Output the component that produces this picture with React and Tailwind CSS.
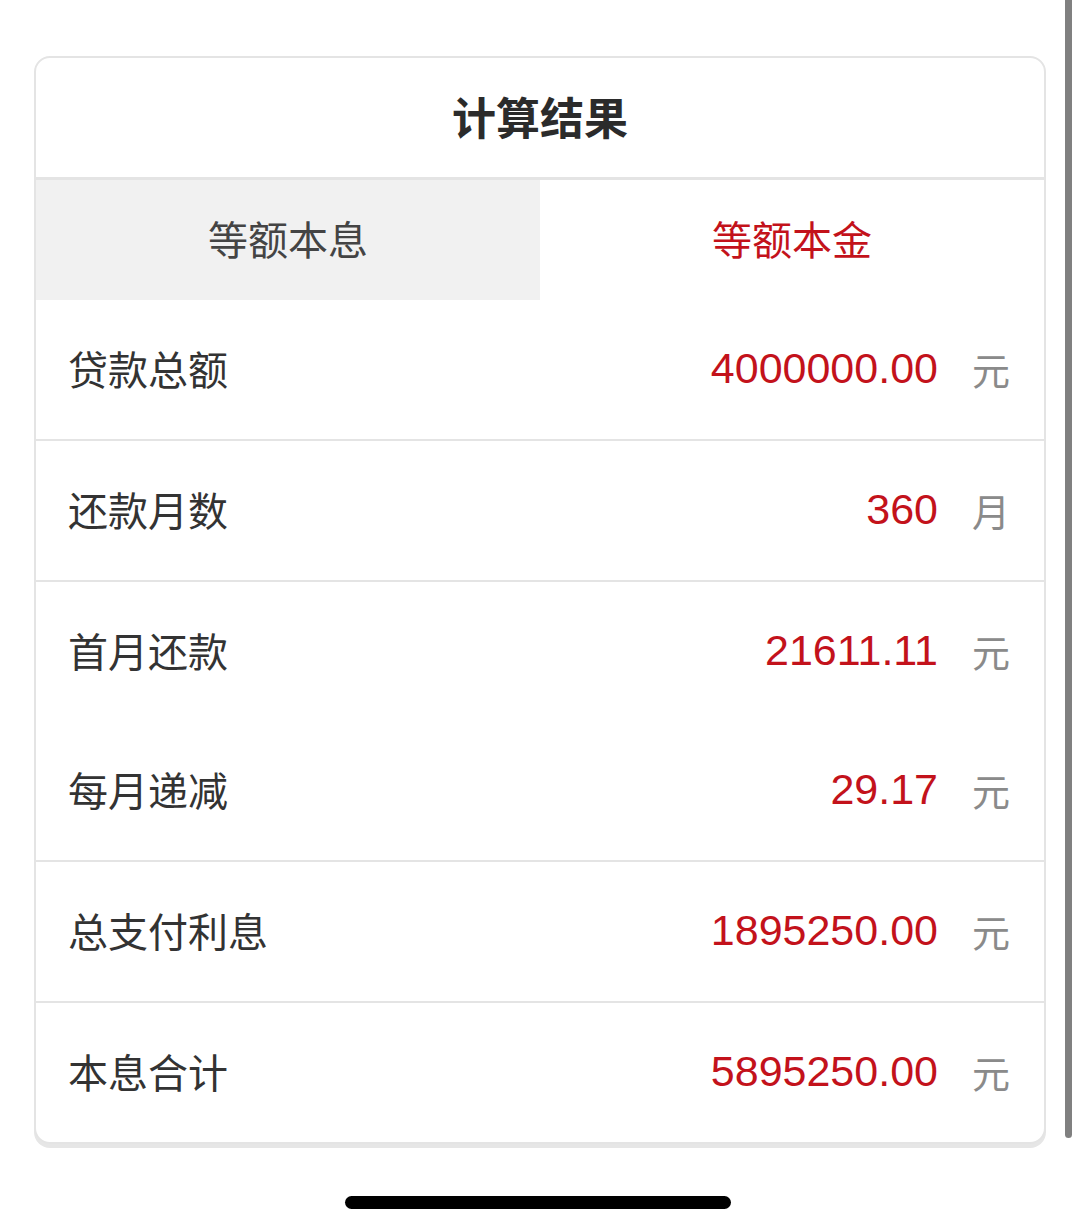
import React from 'react';

const rows = [
  [{ label: '贷款总额', value: '4000000.00', unit: '元' }],
  [{ label: '还款月数', value: '360', unit: '月' }],
  [
    { label: '首月还款', value: '21611.11', unit: '元' },
    { label: '每月递减', value: '29.17', unit: '元' },
  ],
  [{ label: '总支付利息', value: '1895250.00', unit: '元' }],
  [{ label: '本息合计', value: '5895250.00', unit: '元' }],
];

const cjk = { fontFamily: '"Noto Sans CJK SC", "Noto Sans", sans-serif' };
const num = { fontFamily: '"Liberation Sans", Arial, sans-serif' };

function Item({ label, value, unit }) {
  return (
    <div className="h-[139px] flex items-center pl-[32px] pr-[34px]">
      <span className="text-[40px] text-[#333333] flex-1 leading-none -translate-y-[2px]" style={cjk}>
        {label}
      </span>
      <span className="text-[43px] text-[#c3121b] leading-none -translate-y-[1px]" style={num}>
        {value}
      </span>
      <span className="ml-[34px] text-[38px] text-[#8a8a8a] leading-none -translate-y-[1px]" style={cjk}>
        {unit}
      </span>
    </div>
  );
}

export default function App() {
  return (
    <div className="relative min-h-[1231px] bg-white pt-[56px] px-[34px]">
      <div className="rounded-[16px] border-2 border-[#e4e4e4] overflow-hidden shadow-[0_4px_0_#e6e6e6] bg-white">
        <div className="h-[122px] flex items-center justify-center border-b-[3px] border-[#e4e4e4]">
          <h1 className="text-[44px] font-bold text-[#2b2b2b] leading-none -translate-y-[2px]" style={cjk}>
            计算结果
          </h1>
        </div>

        <div className="grid grid-cols-2 h-[120px]">
          <div className="bg-[#f1f1f1] flex items-center justify-center">
            <span className="text-[40px] text-[#444444] leading-none -translate-y-[2px]" style={cjk}>等额本息</span>
          </div>
          <div className="flex items-center justify-center">
            <span className="text-[40px] text-[#c3121b] leading-none -translate-y-[2px]" style={cjk}>等额本金</span>
          </div>
        </div>

        {rows.map((group, i) => (
          <div
            key={i}
            className={i < rows.length - 1 ? 'border-b-2 border-[#e4e4e4]' : ''}
          >
            {group.map((item) => (
              <Item key={item.label} {...item} />
            ))}
          </div>
        ))}
      </div>

      <div className="mt-[52px] mx-auto w-[386px] h-[13px] rounded-full bg-black translate-x-[-2px]" />

      <div className="absolute top-0 right-[8px] w-[7px] h-[1138px] bg-[#808080] rounded-b-full" />
    </div>
  );
}
